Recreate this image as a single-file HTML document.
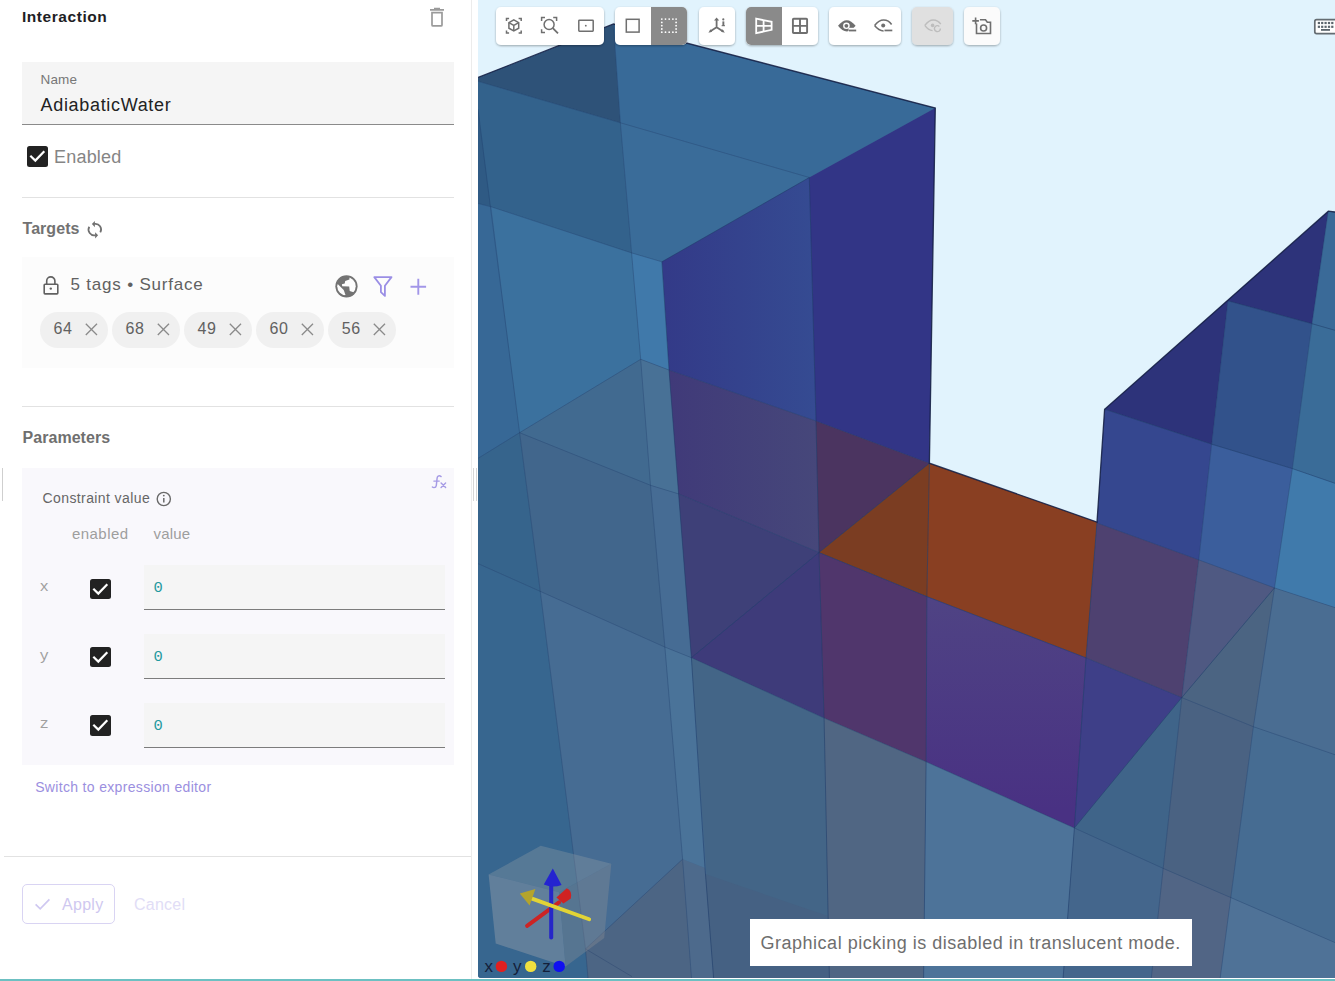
<!DOCTYPE html>
<html><head><meta charset="utf-8">
<style>
*{box-sizing:border-box;margin:0;padding:0}
html,body{width:1335px;height:981px;overflow:hidden;background:#fff;font-family:"Liberation Sans",sans-serif}
.a{position:absolute;white-space:nowrap}
#panel{position:absolute;left:0;top:0;width:471px;height:979px;background:#fff}
.hr{position:absolute;height:1px;background:#e2e2e2}
.chip{position:absolute;top:312px;width:67.5px;height:36px;border-radius:18px;background:#f0f0f0}
.chip span{position:absolute;left:13.5px;top:8.5px;font-size:16px;line-height:16px;color:#616161;letter-spacing:0.6px}
.chip svg{position:absolute;left:45px;top:11px}
.cb{position:absolute;width:20.5px;height:20.5px;border-radius:2.5px;background:#222}
.cb svg{position:absolute;left:0;top:0}
.inp{position:absolute;left:144px;width:301px;height:45px;background:#f5f5f5;border-bottom:1.3px solid #7c7c7c}
.inp span{position:absolute;left:9.5px;top:15px;font-family:"Liberation Mono",monospace;font-size:15.5px;line-height:16px;color:#1f9aa0}
.lbl{position:absolute;font-size:15.5px;line-height:16px;color:#a0a0a0;font-family:"Liberation Mono",monospace}
#vp{position:absolute;left:478px;top:0;width:857px;height:978px;overflow:hidden;border-bottom-left-radius:3px;background:#e1f3fd}
.grp{position:absolute;top:7px;height:38px;background:#fff;border-radius:5px;box-shadow:0 1px 2px rgba(0,0,0,0.28);overflow:hidden}
.btn{position:absolute;top:0;width:36px;height:38px}
.btn svg{position:absolute;left:8px;top:9px}
</style></head><body>
<div id="panel">
  <div class="a" style="left:22px;top:8.6px;font-size:15.5px;line-height:15.5px;font-weight:700;color:#1e1e24;letter-spacing:0.55px">Interaction</div>
  <svg class="a" style="left:428px;top:6px" width="18" height="22" viewBox="0 0 18 22">
    <path d="M6 2.6h6M2 3.9h14" stroke="#9a9a9a" stroke-width="1.8" fill="none"/>
    <path d="M4 6.6h10v12.3q0 1-1 1h-8q-1 0-1-1z" stroke="#9a9a9a" stroke-width="1.7" fill="none"/>
  </svg>
  <!-- name field -->
  <div class="a" style="left:22px;top:62px;width:432px;height:62.5px;background:#f5f5f5;border-bottom:1.3px solid #8a8a8a"></div>
  <div class="a" style="left:40.5px;top:73.3px;font-size:13.5px;line-height:13.5px;color:#777;letter-spacing:0.15px">Name</div>
  <div class="a" style="left:40.5px;top:95.6px;font-size:18px;line-height:18px;color:#222;letter-spacing:0.68px">AdiabaticWater</div>
  <!-- enabled -->
  <div class="cb" style="left:27.3px;top:146.2px"><svg width="20.5" height="20.5" viewBox="0 0 20.5 20.5"><path d="M3.3 9.7l5 4.9l9-9.4" stroke="#fff" stroke-width="2.2" fill="none"/></svg></div>
  <div class="a" style="left:54px;top:147.8px;font-size:18px;line-height:18px;color:#858585;letter-spacing:0.2px">Enabled</div>
  <div class="hr" style="left:22px;top:197px;width:432px"></div>
  <!-- targets -->
  <div class="a" style="left:22.5px;top:220.5px;font-size:16px;line-height:16px;font-weight:700;color:#727272;letter-spacing:0.05px">Targets</div>
  <svg class="a" style="left:82px;top:216px" width="26" height="26" viewBox="0 0 26 26">
    <path d="M12.4 7.9A5.7 5.7 0 0 1 18.3 16.4" stroke="#707070" stroke-width="1.7" fill="none"/>
    <path d="M9.9 8.1L12.9 4.9V11.2z" fill="#707070"/>
    <path d="M7.3 10.7A5.7 5.7 0 0 0 13.6 19.1" stroke="#707070" stroke-width="1.7" fill="none"/>
    <path d="M16.1 19.2L13.1 16.2V22.4z" fill="#707070"/>
  </svg>
  <div class="a" style="left:22px;top:257px;width:432px;height:111px;background:#fcfcfc"></div>
  <svg class="a" style="left:42px;top:275px" width="18" height="20" viewBox="0 0 18 20">
    <path d="M4.7 9.4V6A4.1 4.1 0 0 1 12.9 6V9.4" stroke="#616161" stroke-width="1.6" fill="none"/>
    <rect x="2.2" y="9.3" width="13.6" height="9.6" rx="0.8" stroke="#616161" stroke-width="1.6" fill="none"/>
    <circle cx="8.8" cy="13.6" r="1.2" fill="#616161"/>
  </svg>
  <div class="a" style="left:70.5px;top:276.4px;font-size:17px;line-height:17px;color:#616161;letter-spacing:0.8px">5 tags • Surface</div>
  <svg class="a" style="left:330px;top:270px" width="32" height="32" viewBox="0 0 32 32">
    <defs><clipPath id="gin"><circle cx="16.47" cy="16.31" r="9.25"/></clipPath></defs>
    <circle cx="16.47" cy="16.31" r="11.1" fill="#737373"/>
    <g clip-path="url(#gin)" fill="#fdfdfd">
      <path d="M19.6 4.9H29.4V22.8L23.5 22.2L19.7 20.9L19.2 16.6L12.2 16.3L11.9 14.2L14.7 13.4L15.2 10.9L19.4 9.5z"/>
      <path d="M4.9 13.7L8.2 14.4L13.7 20.1L15.5 25.1L4.9 29.4z"/>
    </g>
  </svg>
  <svg class="a" style="left:372px;top:275px" width="22" height="23" viewBox="0 0 22 23">
    <path d="M2.3 2.1h17.2l-6.6 8.6v10.2l-4-3.8v-6.4z" stroke="#9a8ee5" stroke-width="1.8" fill="none" stroke-linejoin="round"/>
  </svg>
  <svg class="a" style="left:409px;top:277px" width="19" height="19" viewBox="0 0 19 19">
    <path d="M9.3 1.8v16M1.5 9.8h15.6" stroke="#a296e8" stroke-width="1.9" fill="none"/>
  </svg>
  <div class="chip" style="left:40px"><span>64</span><svg width="13" height="13" viewBox="0 0 13 13"><path d="M0.8 0.8l11.2 11.2M12 0.8L0.8 12" stroke="#8a8a8a" stroke-width="1.3"/></svg></div>
  <div class="chip" style="left:112px"><span>68</span><svg width="13" height="13" viewBox="0 0 13 13"><path d="M0.8 0.8l11.2 11.2M12 0.8L0.8 12" stroke="#8a8a8a" stroke-width="1.3"/></svg></div>
  <div class="chip" style="left:184px"><span>49</span><svg width="13" height="13" viewBox="0 0 13 13"><path d="M0.8 0.8l11.2 11.2M12 0.8L0.8 12" stroke="#8a8a8a" stroke-width="1.3"/></svg></div>
  <div class="chip" style="left:256px"><span>60</span><svg width="13" height="13" viewBox="0 0 13 13"><path d="M0.8 0.8l11.2 11.2M12 0.8L0.8 12" stroke="#8a8a8a" stroke-width="1.3"/></svg></div>
  <div class="chip" style="left:328.3px"><span>56</span><svg width="13" height="13" viewBox="0 0 13 13"><path d="M0.8 0.8l11.2 11.2M12 0.8L0.8 12" stroke="#8a8a8a" stroke-width="1.3"/></svg></div>
  <div class="hr" style="left:22px;top:406px;width:432px"></div>
  <!-- parameters -->
  <div class="a" style="left:22.5px;top:429.5px;font-size:16px;line-height:16px;font-weight:700;color:#6f6f6f;letter-spacing:0.05px">Parameters</div>
  <div class="a" style="left:2px;top:468px;width:1px;height:33px;background:#cfcfcf"></div>
  <div class="a" style="left:22px;top:468px;width:432px;height:297px;background:#f9f8fc"></div>
  <svg class="a" style="left:426px;top:470px" width="26" height="26" viewBox="0 0 26 26">
    <g stroke="#a69be5" stroke-width="1.45" fill="none" stroke-linecap="round">
    <path d="M15.1 6.6Q13.6 5.4 12.2 6.1Q11.3 6.7 11.1 8.2L10.3 15.6Q10 17.6 8 17.6Q7 17.6 6.4 17"/>
    <path d="M7.9 11.1H13.2"/>
    <path d="M15.1 13.1L19.6 17.4M19.6 13.1L15.1 17.4"/>
    </g>
  </svg>
  <div class="a" style="left:42.5px;top:491.4px;font-size:14px;line-height:14px;color:#666;letter-spacing:0.4px">Constraint value</div>
  <svg class="a" style="left:155px;top:490px" width="18" height="18" viewBox="0 0 18 18">
    <circle cx="8.8" cy="9" r="6.6" stroke="#6a6a6a" stroke-width="1.4" fill="none"/>
    <path d="M8.8 8v4.6" stroke="#6a6a6a" stroke-width="1.5"/>
    <circle cx="8.8" cy="5.6" r="0.9" fill="#6a6a6a"/>
  </svg>
  <div class="a" style="left:72px;top:526px;font-size:15px;line-height:15px;color:#9e9e9e;letter-spacing:0.44px">enabled</div>
  <div class="a" style="left:153.5px;top:526px;font-size:15px;line-height:15px;color:#9e9e9e;letter-spacing:0.2px">value</div>
  <div class="lbl" style="left:39.5px;top:578.5px">x</div>
  <div class="cb" style="left:90.1px;top:578.6px"><svg width="20.5" height="20.5" viewBox="0 0 20.5 20.5"><path d="M3.3 9.7l5 4.9l9-9.4" stroke="#fff" stroke-width="2.2" fill="none"/></svg></div>
  <div class="inp" style="top:564.8px"><span>0</span></div>
  <div class="lbl" style="left:39.5px;top:647.5px">y</div>
  <div class="cb" style="left:90.1px;top:646.6px"><svg width="20.5" height="20.5" viewBox="0 0 20.5 20.5"><path d="M3.3 9.7l5 4.9l9-9.4" stroke="#fff" stroke-width="2.2" fill="none"/></svg></div>
  <div class="inp" style="top:634px"><span>0</span></div>
  <div class="lbl" style="left:39.5px;top:716px">z</div>
  <div class="cb" style="left:90.1px;top:715px"><svg width="20.5" height="20.5" viewBox="0 0 20.5 20.5"><path d="M3.3 9.7l5 4.9l9-9.4" stroke="#fff" stroke-width="2.2" fill="none"/></svg></div>
  <div class="inp" style="top:703.3px"><span>0</span></div>
  <div class="a" style="left:35.2px;top:779.9px;font-size:14px;line-height:14px;color:#9b8fe0;letter-spacing:0.33px">Switch to expression editor</div>
  <div class="hr" style="left:4px;top:856px;width:467px"></div>
  <div class="a" style="left:22.2px;top:884.3px;width:92.7px;height:39.6px;border:1.2px solid #d9d4f3;border-radius:5px"></div>
  <svg class="a" style="left:33px;top:896px" width="19" height="16" viewBox="0 0 19 16">
    <path d="M2.6 8.4l4.6 4.4l9.2-9.4" stroke="#cfc8f1" stroke-width="1.7" fill="none"/>
  </svg>
  <div class="a" style="left:62px;top:896.5px;font-size:16px;line-height:16px;color:#cfc8f0;letter-spacing:0.3px">Apply</div>
  <div class="a" style="left:134px;top:896.5px;font-size:16px;line-height:16px;color:#e1ddf6;letter-spacing:0.25px">Cancel</div>
</div>
<div class="a" style="left:471px;top:0;width:1px;height:979px;background:#ececec"></div>
<div class="a" style="left:473px;top:468px;width:1px;height:33px;background:#d6d6d6"></div>
<div class="a" style="left:476px;top:468px;width:1px;height:33px;background:#d6d6d6"></div>
<div class="a" style="left:0;top:979px;width:1335px;height:2px;background:#6cc0c2"></div>

<div id="vp">
<svg id="scene" width="857" height="978" viewBox="478 0 857 978" style="position:absolute;left:0;top:0">
<defs><linearGradient id="gP1" gradientUnits="userSpaceOnUse" x1="665" y1="0" x2="815" y2="0"><stop offset="0" stop-color="#333a88"/><stop offset="1" stop-color="#354b92"/></linearGradient><linearGradient id="gL3" gradientUnits="userSpaceOnUse" x1="670" y1="0" x2="818" y2="0"><stop offset="0" stop-color="#403a79"/><stop offset="1" stop-color="#46477a"/></linearGradient><linearGradient id="gPO" gradientUnits="userSpaceOnUse" x1="0" y1="600" x2="0" y2="810"><stop offset="0" stop-color="#4f4384"/><stop offset="1" stop-color="#493183"/></linearGradient></defs>
<polygon points="478.0,0.0 1335.0,0.0 1335.0,978.0 478.0,978.0" fill="#446b93" />
<polygon points="478.0,77.5 613.5,24.0 620.4,122.8 478.0,81.3" fill="#2e5278" />
<polygon points="613.5,24.0 935.3,108.0 809.3,177.5 620.4,122.8" fill="#386a98" />
<polygon points="478.0,81.3 620.4,122.8 631.6,252.9 491.5,206.9 478.0,203.5" fill="#33628c" />
<polygon points="478.0,109.3 490.3,205.8 478.0,203.5" fill="#2f5a84" />
<polygon points="620.4,122.8 809.3,177.5 661.9,261.8 631.6,252.9" fill="#3a6c99" />
<polygon points="661.9,261.8 809.3,177.5 816.0,421.0 669.0,370.0" fill="url(#gP1)" />
<polygon points="809.3,177.5 935.3,108.0 929.4,463.2 816.0,421.0" fill="#323586" />
<polygon points="478.0,203.5 491.5,206.9 519.6,432.7 478.0,458.4" fill="#376896" />
<polygon points="491.5,206.9 631.6,252.9 640.7,359.3 519.6,432.7" fill="#3b719e" />
<polygon points="631.6,252.9 661.9,261.8 669.0,370.0 640.7,359.3" fill="#4079aa" />
<polygon points="478.0,458.4 519.6,432.7 540.3,591.4 478.0,563.6" fill="#36648c" />
<polygon points="519.6,432.7 640.7,359.3 650.5,485.3" fill="#416a90" />
<polygon points="519.6,432.7 650.5,485.3 664.9,647.1 540.3,591.4" fill="#41668c" />
<polygon points="640.7,359.3 669.0,370.0 678.6,493.9 650.5,485.3" fill="#487196" />
<polygon points="650.5,485.3 678.6,493.9 691.4,657.7 664.9,647.1" fill="#466c94" />
<polygon points="669.0,370.0 816.0,421.0 819.0,552.5 678.6,493.9" fill="url(#gL3)" />
<polygon points="678.6,493.9 819.0,552.5 691.4,657.7" fill="#3e4078" />
<polygon points="691.4,657.7 819.0,552.5 824.1,718.1" fill="#3e3b7a" />
<polygon points="816.0,421.0 929.4,463.2 819.0,552.5" fill="#4b3460" />
<polygon points="819.0,552.5 929.4,463.2 926.9,596.6" fill="#7b3d22" />
<polygon points="819.0,552.5 926.9,596.6 926.1,761.8 824.1,718.1" fill="#50366c" />
<polygon points="929.4,463.2 1097.0,522.0 1086.0,657.8 926.9,596.6" fill="#893f22" />
<polygon points="926.9,596.6 1086.0,657.8 1074.4,828.0 926.1,761.8" fill="url(#gPO)" />
<polygon points="1086.0,657.8 1181.8,697.6 1074.4,828.0" fill="#3e3f88" />
<polygon points="478.0,563.6 540.3,591.4 585.5,948.9 588.0,978.0 478.0,978.0" fill="#37668f" />
<polygon points="540.3,591.4 664.9,647.1 682.6,859.2 585.5,948.9" fill="#466c93" />
<polygon points="585.5,948.9 682.6,859.2 691.5,978.0 588.0,978.0" fill="#4c6584" />
<polygon points="664.9,647.1 691.4,657.7 705.0,868.0 682.6,859.2" fill="#4a7399" />
<polygon points="682.6,859.2 705.0,868.0 713.6,978.0 691.5,978.0" fill="#4d6a8c" />
<polygon points="691.4,657.7 824.1,718.1 829.4,978.0 713.6,978.0" fill="#436587" />
<polygon points="705.3,874.0 828.0,916.0 829.4,978.0 713.6,978.0" fill="#456183" />
<polygon points="824.1,718.1 926.1,761.8 923.6,978.0 829.4,978.0" fill="#506683" />
<polygon points="926.1,761.8 1074.4,828.0 1063.1,978.0 923.6,978.0" fill="#4d7399" />
<polygon points="1074.4,828.0 1163.2,868.4 1151.3,978.0 1063.1,978.0" fill="#44668c" />
<polygon points="1163.2,868.4 1230.8,897.6 1220.2,978.0 1151.3,978.0" fill="#516585" />
<polygon points="1230.8,897.6 1335.0,942.6 1335.0,978.0 1220.2,978.0" fill="#4f7297" />
<polygon points="1074.4,828.0 1181.8,697.6 1163.2,868.4" fill="#3f6489" />
<polygon points="1181.8,697.6 1253.4,726.7 1230.8,897.6 1163.2,868.4" fill="#4a6282" />
<polygon points="1253.4,726.7 1335.0,754.7 1335.0,942.6 1230.8,897.6" fill="#466c92" />
<polygon points="1104.6,409.3 1328.3,211.2 1312.0,323.7 1228.0,300.9 1211.7,444.2" fill="#2d337a" />
<polygon points="1228.0,300.9 1312.0,323.7 1292.4,468.6 1211.7,444.2" fill="#32528b" />
<polygon points="1328.3,211.2 1335.0,212.0 1335.0,330.3 1312.0,323.7" fill="#3a6a98" />
<polygon points="1312.0,323.7 1335.0,330.3 1335.0,483.3 1292.4,468.6" fill="#3a6c98" />
<polygon points="1104.6,409.3 1211.7,444.2 1198.8,559.9 1097.0,523.0" fill="#35478f" />
<polygon points="1211.7,444.2 1292.4,468.6 1274.5,587.9 1198.8,559.9" fill="#3b5e9c" />
<polygon points="1292.4,468.6 1335.0,483.3 1335.0,607.6 1274.5,587.9" fill="#407aab" />
<polygon points="1097.0,523.0 1198.8,559.9 1181.8,697.6 1086.0,657.8" fill="#4e4170" />
<polygon points="1198.8,559.9 1274.5,587.9 1181.8,697.6" fill="#4f5982" />
<polygon points="1274.5,587.9 1253.4,726.7 1181.8,697.6" fill="#4b6482" />
<polygon points="1274.5,587.9 1335.0,607.6 1335.0,754.7 1253.4,726.7" fill="#4a6d92" />
<polygon points="478.0,0.0 1335.0,0.0 1335.0,212.0 1328.3,211.2 1104.6,409.3 1097.0,522.0 929.4,463.2 935.3,108.0 613.5,24.0 478.0,77.5" fill="#e1f3fd" />
<polyline points="478.0,81.3 620.4,122.8 809.3,177.5" fill="none" stroke="#1a3562" stroke-opacity="0.32" stroke-width="0.95"/>
<polyline points="613.5,24.0 620.4,122.8 631.6,252.9 640.7,359.3 650.5,485.3 664.9,647.1 682.6,859.2 691.5,978.0" fill="none" stroke="#1a3562" stroke-opacity="0.32" stroke-width="0.95"/>
<polyline points="478.0,203.5 491.5,206.9 631.6,252.9 661.9,261.8" fill="none" stroke="#1a3562" stroke-opacity="0.32" stroke-width="0.95"/>
<polyline points="809.3,177.5 816.0,421.0 819.0,552.5 824.1,718.1 829.4,978.0" fill="none" stroke="#1a3562" stroke-opacity="0.5" stroke-width="0.95"/>
<polyline points="661.9,261.8 669.0,370.0 678.6,493.9 691.4,657.7 705.0,868.0 713.6,978.0" fill="none" stroke="#1a3562" stroke-opacity="0.5" stroke-width="0.95"/>
<polyline points="478.0,109.3 490.3,205.8 519.6,432.7 540.3,591.4 585.5,948.9 588.0,978.0" fill="none" stroke="#1a3562" stroke-opacity="0.32" stroke-width="0.95"/>
<polyline points="478.0,458.4 519.6,432.7 640.7,359.3" fill="none" stroke="#1a3562" stroke-opacity="0.32" stroke-width="0.95"/>
<polyline points="640.7,359.3 669.0,370.0 816.0,421.0 929.4,463.2" fill="none" stroke="#1a3562" stroke-opacity="0.32" stroke-width="0.95"/>
<polyline points="519.6,432.7 650.5,485.3 678.6,493.9 819.0,552.5" fill="none" stroke="#1a3562" stroke-opacity="0.32" stroke-width="0.95"/>
<polyline points="478.0,563.6 540.3,591.4 664.9,647.1 691.4,657.7 824.1,718.1 926.1,761.8 1074.4,828.0" fill="none" stroke="#1a3562" stroke-opacity="0.32" stroke-width="0.95"/>
<polyline points="691.4,657.7 819.0,552.5 929.4,463.2" fill="none" stroke="#1a3562" stroke-opacity="0.5" stroke-width="0.95"/>
<polyline points="819.0,552.5 926.9,596.6 1086.0,657.8" fill="none" stroke="#1a3562" stroke-opacity="0.5" stroke-width="0.95"/>
<polyline points="929.4,463.2 926.9,596.6 926.1,761.8 923.6,978.0" fill="none" stroke="#1a3562" stroke-opacity="0.5" stroke-width="0.95"/>
<polyline points="1097.0,522.0 1086.0,657.8 1074.4,828.0 1063.1,978.0" fill="none" stroke="#1a3562" stroke-opacity="0.5" stroke-width="0.95"/>
<polyline points="1074.4,828.0 1181.8,697.6 1274.5,587.9" fill="none" stroke="#1a3562" stroke-opacity="0.5" stroke-width="0.95"/>
<polyline points="1086.0,657.8 1181.8,697.6 1253.4,726.7 1335.0,754.7" fill="none" stroke="#1a3562" stroke-opacity="0.32" stroke-width="0.95"/>
<polyline points="1097.0,523.0 1198.8,559.9 1274.5,587.9 1335.0,607.6" fill="none" stroke="#1a3562" stroke-opacity="0.32" stroke-width="0.95"/>
<polyline points="1104.6,409.3 1211.7,444.2 1292.4,468.6 1335.0,483.3" fill="none" stroke="#1a3562" stroke-opacity="0.5" stroke-width="0.95"/>
<polyline points="1228.0,300.9 1312.0,323.7 1335.0,330.3" fill="none" stroke="#1a3562" stroke-opacity="0.5" stroke-width="0.95"/>
<polyline points="1228.0,300.9 1211.7,444.2 1198.8,559.9 1181.8,697.6 1163.2,868.4 1151.3,978.0" fill="none" stroke="#1a3562" stroke-opacity="0.32" stroke-width="0.95"/>
<polyline points="1328.3,211.2 1312.0,323.7 1292.4,468.6 1274.5,587.9 1253.4,726.7 1230.8,897.6 1220.2,978.0" fill="none" stroke="#1a3562" stroke-opacity="0.32" stroke-width="0.95"/>
<polyline points="1074.4,828.0 1163.2,868.4 1230.8,897.6 1335.0,942.6" fill="none" stroke="#1a3562" stroke-opacity="0.32" stroke-width="0.95"/>
<polyline points="682.6,859.2 585.5,948.9 632.0,976.6" fill="none" stroke="#1a3562" stroke-opacity="0.32" stroke-width="0.95"/>
<polyline points="809.3,177.5 661.9,261.8" fill="none" stroke="#1a3562" stroke-opacity="0.5" stroke-width="0.95"/>
<polyline points="478.0,77.5 613.5,24.0 935.3,108.0 929.4,463.2 1097.0,522.0 1104.6,409.3 1328.3,211.2 1335.0,212.0" fill="none" stroke="#101a40" stroke-opacity="0.85" stroke-width="1.3"/>
</svg>
<svg id="tb" width="857" height="60" viewBox="478 0 857 60" style="position:absolute;left:0;top:0">
<defs><filter id="sh" x="-10%" y="-20%" width="120%" height="150%"><feDropShadow dx="0" dy="1" stdDeviation="0.9" flood-color="#000" flood-opacity="0.32"/></filter>
<clipPath id="c2"><rect x="615" y="7" width="72" height="38" rx="5"/></clipPath>
<clipPath id="c4"><rect x="746" y="7" width="72" height="38" rx="5"/></clipPath></defs>
<g filter="url(#sh)">
<rect x="496" y="7" width="108" height="38" rx="5" fill="#fff"/>
<rect x="615" y="7" width="72" height="38" rx="5" fill="#fff"/>
<rect x="699" y="7" width="36" height="38" rx="5" fill="#fff"/>
<rect x="746" y="7" width="72" height="38" rx="5" fill="#fff"/>
<rect x="829" y="7" width="72" height="38" rx="5" fill="#fff"/>
<rect x="912" y="7" width="41" height="38" rx="5" fill="#e0e0e0"/>
<rect x="964" y="7" width="36" height="38" rx="5" fill="#fbfbfb"/>
</g>
<rect x="651" y="7" width="36" height="38" fill="#8a8a8a" clip-path="url(#c2)"/>
<rect x="746" y="7" width="36" height="38" fill="#8a8a8a" clip-path="url(#c4)"/>
<g fill="none" stroke="#6f6f6f" stroke-width="1.5">
 <!-- icon1 brackets -->
 <path d="M506.5 21v-2.6h2.6M518.6 18.4h2.6v2.6M521.2 30.4v2.6h-2.6M509.1 33h-2.6v-2.6"/>
 <path d="M513.8 19.8l4.9 2.8v5.6l-4.9 2.8l-4.9-2.8v-5.6z"/>
 <path d="M508.9 22.6l4.9 2.8l4.9-2.8M513.8 25.4v5.6"/>
 <!-- icon2 -->
 <path d="M541.6 21v-3.4h3.4M553.2 17.6h3.4v3.4M541.6 29.2v3.4h3.4"/>
 <circle cx="549.1" cy="24.5" r="5"/>
 <path d="M552.8 28.2l5.2 5.2" stroke-width="1.8"/>
 <!-- icon3 -->
 <rect x="578.8" y="20.2" width="14.4" height="11" rx="0.6"/>
 <!-- square -->
 <rect x="626.3" y="19.3" width="12.8" height="12.8"/>
 <!-- 2x2 grid -->
 <rect x="792.9" y="18.8" width="14.2" height="14.2" rx="0.8" stroke-width="1.9"/>
 <path d="M800 18.8v14.2M792.9 25.9h14.2" stroke-width="1.9"/>
 <!-- eye outline -->
 <path d="M874.6 25.5q4.2-5.6 9-5.6q5.2 0 8 4.6"/>
 <path d="M874.6 25.5q4.2 5.4 9 5.4"/>
 <!-- camera -->
 <path d="M976.5 23.5v10h14v-11.2h-3.2l-1.8-2.6h-5.6" stroke-width="1.6"/>
 <path d="M975.6 17.6v6.6M972.3 20.9h6.6" stroke-width="1.6"/>
 <circle cx="983.6" cy="28" r="3" stroke-width="1.6"/>
</g>
<circle cx="585.8" cy="25.7" r="0.9" fill="#6f6f6f"/>
<g fill="#fff">
 <circle cx="661.8" cy="19.1" r="0.9"/><circle cx="665.5" cy="19.1" r="0.9"/><circle cx="669.2" cy="19.1" r="0.9"/><circle cx="672.9" cy="19.1" r="0.9"/><circle cx="676.1" cy="19.1" r="0.9"/>
 <circle cx="661.8" cy="32.2" r="0.9"/><circle cx="665.5" cy="32.2" r="0.9"/><circle cx="669.2" cy="32.2" r="0.9"/><circle cx="672.9" cy="32.2" r="0.9"/><circle cx="676.1" cy="32.2" r="0.9"/>
 <circle cx="661.8" cy="22.4" r="0.9"/><circle cx="661.8" cy="25.7" r="0.9"/><circle cx="661.8" cy="29" r="0.9"/>
 <circle cx="676.1" cy="22.4" r="0.9"/><circle cx="676.1" cy="25.7" r="0.9"/><circle cx="676.1" cy="29" r="0.9"/>
</g>
<!-- axes icon -->
<g stroke="#6f6f6f" stroke-width="1.8" fill="none">
 <path d="M716.6 27.3v-7.5M716.6 27.3l-6.6 4.3M716.6 27.3l6.6 4.3"/>
</g>
<g fill="#6f6f6f">
 <path d="M716.6 17.6l-2.6 3h5.2z"/>
 <path d="M708.4 32.8l2.2-3.6l1.5 2.6z"/>
 <path d="M724.8 32.8l-2.2-3.6l-1.5 2.6z"/>
 <rect x="722.4" y="21.4" width="1.9" height="4.6"/><rect x="721.6" y="25.2" width="3.4" height="1"/><circle cx="723.3" cy="19.4" r="1.1"/>
</g>
<!-- perspective grid icon (white) -->
<g stroke="#fff" stroke-width="1.8" fill="none">
 <path d="M756.2 18.6l15.4 3.2v8l-15.4 3.4z"/>
 <path d="M763.6 20.2v11.4M756.2 25.9h15.4"/>
</g>
<!-- filled eye -->
<path d="M838 25.8Q846.8 14.6 855.6 25.8Q846.8 37 838 25.8z" fill="#6f6f6f"/>
<circle cx="846.4" cy="25.8" r="3.3" fill="#fff"/>
<circle cx="846.4" cy="25.8" r="1.9" fill="#6f6f6f"/>
<rect x="848.6" y="27.8" width="9" height="5" fill="#fff"/>
<rect x="849" y="29.6" width="7.2" height="1.8" fill="#6f6f6f"/>
<circle cx="883.2" cy="25.6" r="2" fill="#6f6f6f"/>
<rect x="884.5" y="29.6" width="7.8" height="1.7" fill="#6f6f6f"/>
<!-- disabled eye -->
<g stroke="#bdbdbd" stroke-width="1.4" fill="none">
 <path d="M924.8 25.4q4-5.4 8.4-5.4q4.8 0 7.6 4.2"/>
 <path d="M924.8 25.4q3.4 4.8 7.8 5.2"/>
 <path d="M940.4 28.6a3 3 0 1 1-1-2.2"/>
</g>
<circle cx="932.6" cy="25.4" r="1.8" fill="#bdbdbd"/>
<!-- keyboard -->
<rect x="1314.8" y="19.6" width="24" height="14" rx="1.8" fill="#fff" stroke="#646c72" stroke-width="1.7"/>
<g fill="#5a646c">
 <rect x="1317.8" y="21.9" width="2.2" height="2.2"/><rect x="1321.1" y="21.9" width="2.2" height="2.2"/><rect x="1324.5" y="21.9" width="2.2" height="2.2"/><rect x="1327.9" y="21.9" width="2.2" height="2.2"/><rect x="1331.2" y="21.9" width="2.2" height="2.2"/>
 <rect x="1317.8" y="25.7" width="2.2" height="2.2"/><rect x="1321.1" y="25.7" width="2.2" height="2.2"/><rect x="1324.5" y="25.7" width="2.2" height="2.2"/><rect x="1327.9" y="25.7" width="2.2" height="2.2"/><rect x="1331.2" y="25.7" width="2.2" height="2.2"/>
 <rect x="1321" y="29" width="9" height="1.8"/>
</g>
</svg>
<svg id="gz" width="857" height="978" viewBox="478 0 857 978" style="position:absolute;left:0;top:0">
<polygon points="488.6,874.4 540.7,845.8 611.3,863.7 559.2,892.3" fill="#a0a4aa" fill-opacity="0.3"/>
<polygon points="488.6,874.4 559.2,892.3 565.6,966.4 495.7,943.6" fill="#aaacaf" fill-opacity="0.37"/>
<polygon points="559.2,892.3 611.3,863.7 604.2,937.9 565.6,966.4" fill="#8a8e96" fill-opacity="0.38"/>
<path d="M527.1 925.8L559 902.4" stroke="#cc2424" stroke-width="4" stroke-linecap="round"/>
<path d="M556.4 897.6L566.8 888.2Q572.4 890.6 570.8 898.4L563.4 903.6z" fill="#d02222"/>
<path d="M551.2 937.6V883" stroke="#2626c8" stroke-width="4" stroke-linecap="round"/>
<path d="M552.8 868.4L543.8 884.6Q552.6 888.4 561.6 885z" fill="#2424d0"/>
<path d="M589.2 919.3L532 898.6" stroke="#e2d436" stroke-width="3.8" stroke-linecap="round"/>
<path d="M519.8 893.6L535.4 889L529.6 905.4z" fill="#b4a42c"/>
<text x="484.6" y="971.6" font-family="Liberation Sans" font-size="17" fill="#14203a">x</text>
<circle cx="501.4" cy="966.4" r="5.7" fill="#e02020"/>
<text x="513" y="971.6" font-family="Liberation Sans" font-size="17" fill="#14203a">y</text>
<circle cx="530.7" cy="966.4" r="5.7" fill="#f0e040"/>
<text x="542.3" y="971.6" font-family="Liberation Sans" font-size="17" fill="#14203a">z</text>
<circle cx="559.2" cy="966.4" r="5.7" fill="#1010f0"/>
</svg>
<div class="a" style="left:272px;top:919px;width:442px;height:47px;background:#fff"></div>
<div class="a" style="left:282.6px;top:934px;font-size:18px;line-height:18px;color:#6e6e6e;letter-spacing:0.5px">Graphical picking is disabled in translucent mode.</div>
</div>
</body></html>
